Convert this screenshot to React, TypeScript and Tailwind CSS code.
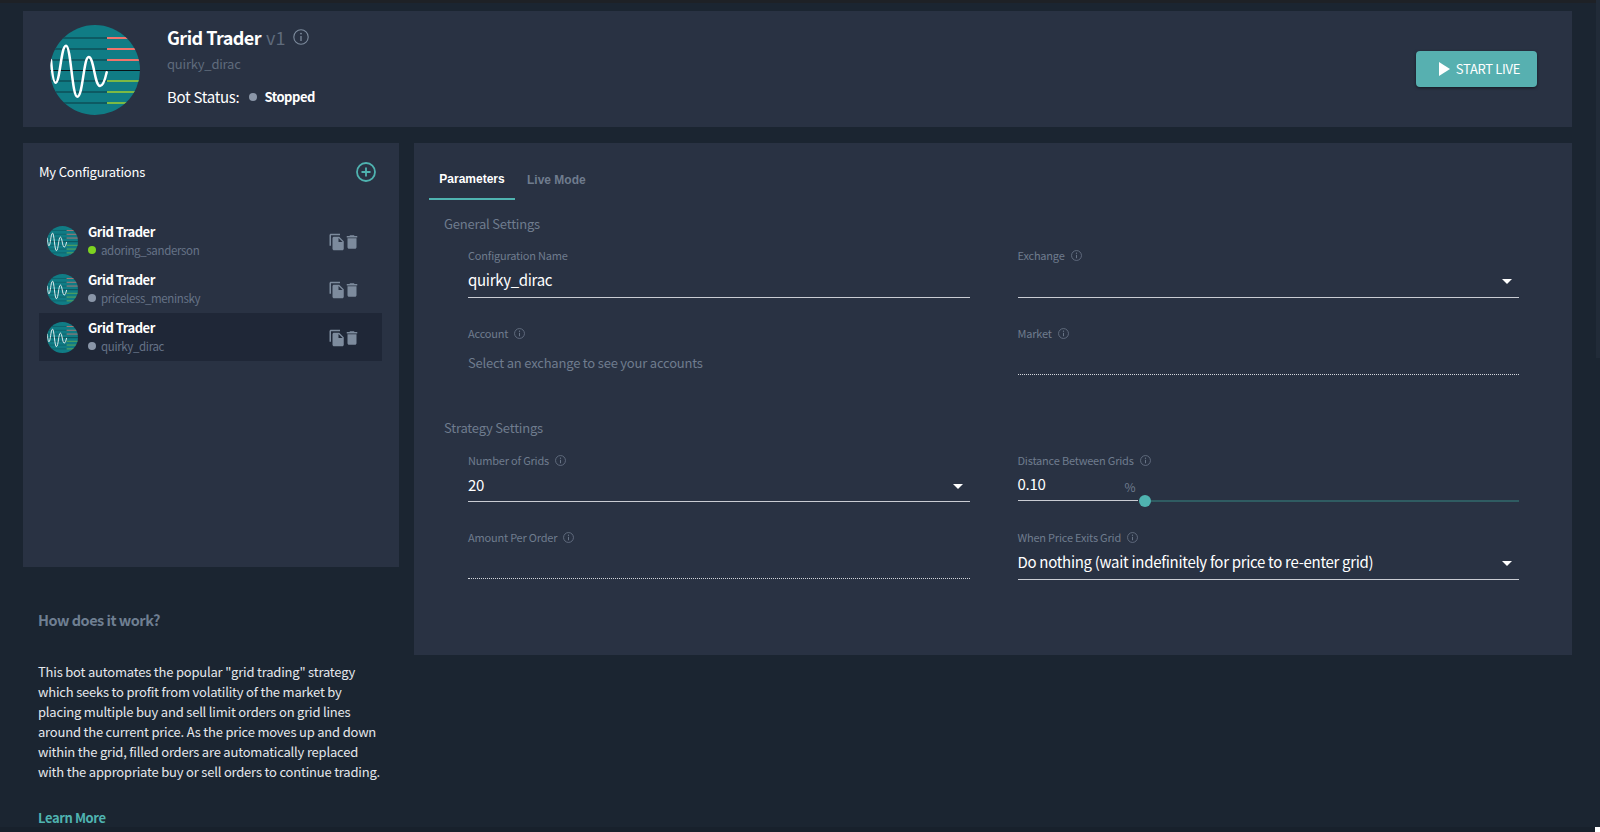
import React from "react";
import { MdFileCopy, MdDelete } from "react-icons/md";

function Logo({ size }: { size: number }) {
  const id = `clip-${size}`;
  const reds = [13, 24, 35];
  const greens = [56, 67, 78];
  return (
    <svg width={size} height={size} viewBox="0 0 90 90" className="shrink-0">
      <defs>
        <clipPath id={id}>
          <circle cx="45" cy="45" r="45" />
        </clipPath>
      </defs>
      <g clipPath={`url(#${id})`}>
        <rect width="90" height="90" fill="#107c85" />
        {[...reds, ...greens].map((y) => (
          <line key={y} x1="0" x2="57" y1={y} y2={y} stroke="#0d4f59" strokeWidth="1.500" />
        ))}
        <line x1="0" x2="90" y1="45.500" y2="45.500" stroke="#071418" strokeWidth="1.200" />
        {reds.map((y) => (
          <line key={y} x1="57" x2="90" y1={y} y2={y} stroke="#f0736b" strokeWidth="2" />
        ))}
        {greens.map((y) => (
          <line key={y} x1="57" x2="90" y1={y} y2={y} stroke="#7cb944" strokeWidth="2" />
        ))}
        <path
          d="M1 35C2 47 3.500 57.700 5.700 57.700C10 57.700 11 20.700 16 20.700C21 20.700 22 71.700 27.300 71.700C33 71.700 33.500 32 38.700 32C44 32 44.500 61 50 61C53 61 55 55 56.700 47.300"
          fill="none"
          stroke="#ffffff"
          strokeWidth="2.500"
          strokeLinecap="round"
        />
      </g>
    </svg>
  );
}

function Info({ size = 11, className = "text-[#6f7c8e]" }: { size?: number; className?: string }) {
  return (
    <svg width={size} height={size} viewBox="0 0 16 16" fill="none" className={`shrink-0 ${className}`}>
      <circle cx="8" cy="8" r="7.200" stroke="currentColor" strokeWidth="1.100" />
      <line x1="8" x2="8" y1="7" y2="12" stroke="currentColor" strokeWidth="1.300" />
      <circle cx="8" cy="4.600" r="0.900" fill="currentColor" />
    </svg>
  );
}

function Arrow() {
  return (
    <svg width="10" height="5" viewBox="0 0 10 5" className="shrink-0">
      <polygon points="0,0 10,0 5,5" fill="#ffffff" />
    </svg>
  );
}

function Label({ text, info = true }: { text: string; info?: boolean }) {
  return (
    <div className="flex h-4 items-center gap-[6px] text-[11px] leading-4 tracking-[-0.2px] text-[#6f7c8e]">
      <span>{text}</span>
      {info && <Info />}
    </div>
  );
}

function Field({
  label,
  info = true,
  value,
  arrow = false,
  dotted = false,
  short = false,
}: {
  label: string;
  info?: boolean;
  value?: string;
  arrow?: boolean;
  dotted?: boolean;
  short?: boolean;
}) {
  return (
    <div className="h-[77px]">
      <Label text={label} info={info} />
      <div
        className={
          dotted
            ? "mt-[4px] h-[30px] border-b border-dotted border-[#d5d8de]"
            : `mt-[4px] flex ${short ? "h-[30px]" : "h-[31px]"} items-start justify-between border-b border-[#c9ccd3] pr-[7px]`
        }
      >
        {value && <span className="text-[15px] leading-[26px] tracking-[-0.3px] text-white">{value}</span>}
        {arrow && (
          <span className="ml-auto mt-[12px] flex">
            <Arrow />
          </span>
        )}
      </div>
    </div>
  );
}

function Section({ title }: { title: string }) {
  return <div className="ml-[15px] h-5 text-[13px] leading-5 tracking-[-0.2px] text-[#6f7c8e]">{title}</div>;
}

function ConfigRow({ name, color, active }: { name: string; color: string; active?: boolean }) {
  return (
    <div className={`flex h-12 items-center pl-2 pr-[21px] ${active ? "bg-[#1f2737]" : ""}`}>
      <Logo size={31} />
      <div className="ml-[10px]">
        <div className="text-[13px] font-bold leading-[18px] tracking-[-0.5px] text-white">Grid Trader</div>
        <div className="flex h-[18px] items-center text-[11.500px] leading-[18px] tracking-[-0.35px] text-[#667387]">
          <span className="mr-[5px] h-2 w-2 rounded-full" style={{ backgroundColor: color }} />
          {name}
        </div>
      </div>
      <div className="ml-auto mt-[2px] flex items-center text-[#7d8b9d]">
        <MdFileCopy size={18} />
        <MdDelete size={18} className="-ml-[3px]" />
      </div>
    </div>
  );
}

export default function App() {
  return (
    <div
      className="relative h-[832px] w-[1600px] overflow-hidden bg-[#1b2531] pl-[23px] pr-[28px] pt-[11px] text-white"
      style={{ fontFamily: '"Noto Sans CJK JP", "Noto Sans", sans-serif' }}
    >
      <div className="absolute left-0 right-0 top-0 h-[3px] bg-[#1e2126]" />

      <header className="flex h-[116px] items-center bg-[#293243] pl-[27px] pr-[35px]">
        <div className="mt-[2px] flex">
          <Logo size={90} />
        </div>
        <div className="ml-[27px] flex h-full flex-col pt-3">
          <div className="flex h-7 items-center">
            <span className="text-[18px] font-bold leading-7 tracking-[-0.55px]">Grid Trader</span>
            <span className="ml-[5px] text-[18px] leading-7 text-[#5f6b7c]">v1</span>
            <Info size={16} className="ml-[8px] text-[#7d8b9d]" />
          </div>
          <div className="mt-[4px] h-[18px] text-[13px] leading-[18px] tracking-[-0.2px] text-[#5f6b7c]">quirky_dirac</div>
          <div className="mt-[12px] flex h-6 items-center">
            <span className="text-[15px] leading-6 tracking-[-0.3px]">Bot Status:</span>
            <span className="ml-[10px] h-2 w-2 rounded-full bg-[#8a96a8]" />
            <span className="ml-[7px] text-[13px] font-bold leading-6 tracking-[-0.45px]">Stopped</span>
          </div>
        </div>
        <button className="ml-auto flex h-9 w-[121px] items-center justify-center gap-[6px] rounded bg-[#57b0b0] pl-[6px] text-[13px] leading-5 tracking-[-0.3px] text-white shadow-[0_1px_3px_rgba(0,0,0,0.5)]">
          <svg width="11" height="14" viewBox="0 0 11 14" className="shrink-0">
            <polygon points="0,0 11,7 0,14" fill="#ffffff" />
          </svg>
          START LIVE
        </button>
      </header>

      <div className="mt-[16px] flex items-start gap-[15px]">
        <div className="w-[376px] shrink-0">
          <div className="h-[424px] bg-[#293243] pl-4 pr-[17px] pt-[18px]">
            <div className="flex h-[22px] items-center justify-between pr-[6px]">
              <span className="text-[13px] leading-[22px] tracking-[-0.2px]">My Configurations</span>
              <svg width="20" height="20" viewBox="0 0 20 20" fill="none" className="-mt-[1px] text-[#4fb3b0]">
                <circle cx="10" cy="10" r="9" stroke="currentColor" strokeWidth="1.800" />
                <path d="M10 5.500V14.500M5.500 10H14.500" stroke="currentColor" strokeWidth="1.800" />
              </svg>
            </div>
            <div className="mt-[34px]">
              <ConfigRow name="adoring_sanderson" color="#7ed321" />
              <ConfigRow name="priceless_meninsky" color="#8a96a8" />
              <ConfigRow name="quirky_dirac" color="#8a96a8" active />
            </div>
          </div>
          <div className="pl-[15px]">
            <div className="mt-[41px] h-6 text-[14.500px] font-bold leading-6 tracking-[-0.5px] text-[#6f7f92]">How does it work?</div>
            <p className="mt-[30px] w-[348px] text-[13px] leading-5 tracking-[-0.2px] text-[#e4e7ec]">
              This bot automates the popular "grid trading" strategy which seeks to profit from volatility of the market
              by placing multiple buy and sell limit orders on grid lines around the current price. As the price moves up
              and down within the grid, filled orders are automatically replaced with the appropriate buy or sell orders
              to continue trading.
            </p>
            <div className="mt-[26px] h-5 text-[13px] font-bold leading-5 tracking-[-0.4px] text-[#4fb3b0]">Learn More</div>
          </div>
        </div>

        <main className="h-[512px] flex-1 bg-[#293243] pl-[15px]">
          <div className="flex h-[57px] items-start" style={{ fontFamily: '"Liberation Sans", Arial, sans-serif' }}>
            <div className="flex h-[57px] w-[86px] justify-center border-b-2 border-[#4fb3b0] pt-[28px] text-[12px] font-bold leading-4 text-white">
              Parameters
            </div>
            <div className="ml-3 pt-[29px] text-[12px] font-bold leading-4 text-[#6f7c8e]">Live Mode</div>
          </div>
          <div className="mt-[14px]">
            <Section title="General Settings" />
          </div>
          <div className="ml-[39px] mt-[13px] grid w-[1051px] grid-cols-2 gap-x-12 gap-y-[1px]">
            <Field label="Configuration Name" info={false} value="quirky_dirac" />
            <Field label="Exchange" arrow />
            <div className="h-[77px]">
              <Label text="Account" />
              <div className="mt-[12px] h-5 text-[13px] leading-5 tracking-[-0.2px] text-[#6f7c8e]">
                Select an exchange to see your accounts
              </div>
            </div>
            <Field label="Market" dotted />
          </div>
          <div className="mt-[16px]">
            <Section title="Strategy Settings" />
          </div>
          <div className="ml-[39px] mt-[14px] grid w-[1051px] grid-cols-2 gap-x-12">
            <Field label="Number of Grids" value="20" arrow short />
            <div className="h-[77px]">
              <Label text="Distance Between Grids" />
              <div className="mt-[4px] flex h-[29px] items-end">
                <div className="flex h-full w-[120px] shrink-0 items-start justify-between border-b border-[#c9ccd3] pr-[2px]">
                  <span className="-mt-[1px] text-[15px] leading-[26px] tracking-[-0.3px] text-white">0.10</span>
                  <span className="mt-[5px] text-[12px] leading-5 text-[#6f7c8e]">%</span>
                </div>
                <div className="-mb-[6px] flex flex-1 items-center">
                  <span className="ml-[1px] h-3 w-3 shrink-0 rounded-full bg-[#4fb3b0]" />
                  <span className="h-[2px] flex-1 bg-[#2f5c62]" />
                </div>
              </div>
            </div>
            <Field label="Amount Per Order" dotted />
            <Field label="When Price Exits Grid" value="Do nothing (wait indefinitely for price to re-enter grid)" arrow />
          </div>
        </main>
      </div>

      <div className="absolute right-0 top-0 h-[358px] w-1 bg-[#212b38]" />
      <div className="absolute bottom-0 left-0 right-0 h-[5px] bg-[#18212c]" />
      <div className="absolute bottom-0 right-0 h-[5px] w-[5px] bg-white" />
    </div>
  );
}
